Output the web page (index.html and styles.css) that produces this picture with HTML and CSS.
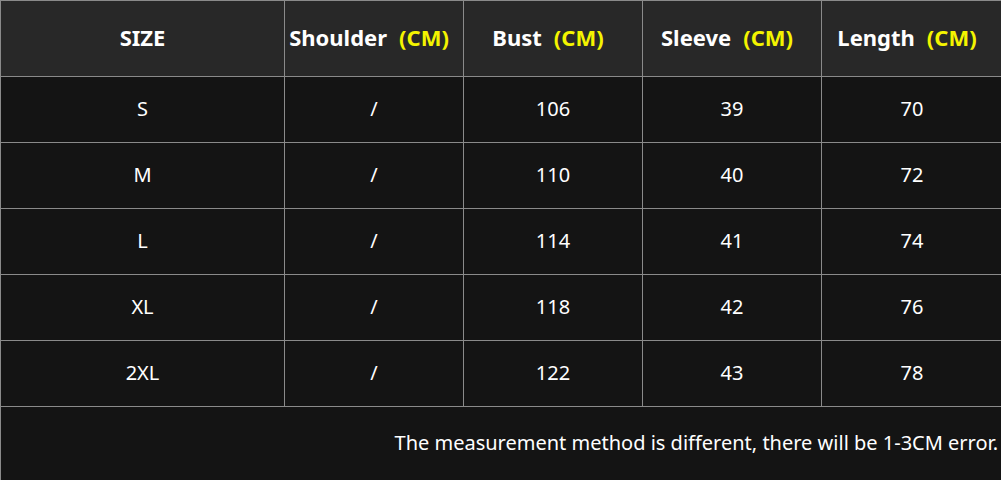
FILE: index.html
```html
<!DOCTYPE html>
<html>
<head>
<meta charset="utf-8">
<link rel="stylesheet" href="styles.css">
</head>
<body>
<table class="size-table">
  <colgroup>
    <col class="c1"><col class="c2"><col class="c3"><col class="c4"><col class="c5">
  </colgroup>
  <thead>
    <tr class="head">
      <th>SIZE</th>
      <th class="measure">Shoulder<span class="unit">(CM)</span></th>
      <th class="measure">Bust<span class="unit">(CM)</span></th>
      <th class="measure">Sleeve<span class="unit">(CM)</span></th>
      <th class="measure">Length<span class="unit">(CM)</span></th>
    </tr>
  </thead>
  <tbody>
    <tr class="row"><td>S</td><td>/</td><td>106</td><td>39</td><td>70</td></tr>
    <tr class="row"><td>M</td><td>/</td><td>110</td><td>40</td><td>72</td></tr>
    <tr class="row"><td>L</td><td>/</td><td>114</td><td>41</td><td>74</td></tr>
    <tr class="row"><td>XL</td><td>/</td><td>118</td><td>42</td><td>76</td></tr>
    <tr class="row"><td>2XL</td><td>/</td><td>122</td><td>43</td><td>78</td></tr>
    <tr class="note"><td colspan="5">The measurement method is different, there will be 1-3CM error.</td></tr>
  </tbody>
</table>
</body>
</html>
```
FILE: styles.css
```css
html, body {
  margin: 0;
  padding: 0;
  background: #141414;
}
.size-table {
  width: 1002px;
  border-collapse: collapse;
  table-layout: fixed;
  font-family: "Noto Sans", "Open Sans", sans-serif;
  color: #ffffff;
}
.c1 { width: 284px; }
.c2 { width: 179px; }
.c3 { width: 179px; }
.c4 { width: 179px; }
.c5 { width: 181px; }
.size-table th,
.size-table td {
  border: 1px solid #8a8a8a;
  text-align: center;
  padding: 0 0 3px 0;
}
.head {
  height: 76px;
}
.head th {
  background: #282828;
  font-weight: 700;
  font-size: 22px;
}
.head th.measure {
  padding-right: 10px;
}
.unit {
  color: #f4f400;
  margin-left: 12px;
}
.row {
  height: 66px;
}
.row td {
  background: #141414;
  font-size: 20px;
  font-weight: 400;
}
.note {
  height: 76px;
}
.note td {
  text-align: right;
  padding-right: 4px;
  padding-bottom: 5px;
  font-size: 20px;
  border-bottom: none;
}
```
